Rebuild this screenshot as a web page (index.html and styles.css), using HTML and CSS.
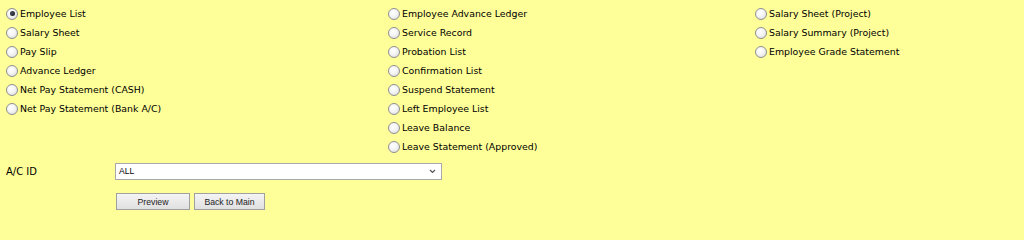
FILE: index.html
```html
<!DOCTYPE html>
<html>
<head>
<meta charset="utf-8">
<link rel="stylesheet" href="styles.css">
</head>
<body>
<div class="page">
  <div class="options">
    <div class="col col1">
      <label class="opt"><input type="radio" name="r" checked><span>Employee List</span></label>
      <label class="opt"><input type="radio" name="r"><span>Salary Sheet</span></label>
      <label class="opt"><input type="radio" name="r"><span>Pay Slip</span></label>
      <label class="opt"><input type="radio" name="r"><span>Advance Ledger</span></label>
      <label class="opt"><input type="radio" name="r"><span>Net Pay Statement (CASH)</span></label>
      <label class="opt"><input type="radio" name="r"><span>Net Pay Statement (Bank A/C)</span></label>
    </div>
    <div class="col col2">
      <label class="opt"><input type="radio" name="r"><span>Employee Advance Ledger</span></label>
      <label class="opt"><input type="radio" name="r"><span>Service Record</span></label>
      <label class="opt"><input type="radio" name="r"><span>Probation List</span></label>
      <label class="opt"><input type="radio" name="r"><span>Confirmation List</span></label>
      <label class="opt"><input type="radio" name="r"><span>Suspend Statement</span></label>
      <label class="opt"><input type="radio" name="r"><span>Left Employee List</span></label>
      <label class="opt"><input type="radio" name="r"><span>Leave Balance</span></label>
      <label class="opt"><input type="radio" name="r"><span>Leave Statement (Approved)</span></label>
    </div>
    <div class="col col3">
      <label class="opt"><input type="radio" name="r"><span>Salary Sheet (Project)</span></label>
      <label class="opt"><input type="radio" name="r"><span>Salary Summary (Project)</span></label>
      <label class="opt"><input type="radio" name="r"><span>Employee Grade Statement</span></label>
    </div>
  </div>
  <div class="field">
    <span class="field-label">A/C ID</span>
    <div class="select">
      <span class="select-value">ALL</span>
      <svg class="chev" width="7" height="5" viewBox="0 0 7 5"><path d="M1 1 L3.5 3.5 L6 1" fill="none" stroke="#555" stroke-width="1.2"/></svg>
    </div>
  </div>
  <div class="actions">
    <button class="btn btn-preview">Preview</button>
    <button class="btn btn-back">Back to Main</button>
  </div>
</div>
</body>
</html>
```
FILE: styles.css
```css
html, body {
  margin: 0;
  padding: 0;
  background: #ffff99;
}
body {
  font-family: "DejaVu Sans", Verdana, sans-serif;
  font-size: 9.4px;
  color: #000;
  width: 1024px;
  height: 224px;
  overflow: hidden;
}
.page {
  padding: 4px 0 0 6px;
}
.options {
  display: grid;
  grid-template-columns: 382px 367px auto;
  align-items: start;
}
.col {
  display: flex;
  flex-direction: column;
}
.opt {
  display: flex;
  align-items: center;
  height: 19px;
  white-space: nowrap;
}
.opt input {
  appearance: none;
  -webkit-appearance: none;
  margin: 0 2px 0 0;
  width: 12px;
  height: 12px;
  border-radius: 50%;
  border: 1px solid #8f8f8f;
  background: radial-gradient(circle at 40% 35%, #ffffff 0%, #f4f4f4 45%, #d6d6d6 100%);
  box-sizing: border-box;
  position: relative;
  flex: none;
}
.opt input:checked::after {
  content: "";
  position: absolute;
  left: 2.5px;
  top: 2.5px;
  width: 5px;
  height: 5px;
  border-radius: 50%;
  background: radial-gradient(circle at 40% 40%, #4a4a58 0%, #15151f 100%);
}
.field {
  display: flex;
  align-items: center;
  margin-top: 6px;
  height: 18px;
}
.field-label {
  width: 109px;
  font-size: 10px;
}
.select {
  width: 327px;
  height: 17px;
  box-sizing: border-box;
  border: 1px solid #a9a9a9;
  background: #fff;
  display: flex;
  align-items: center;
  justify-content: space-between;
  padding: 0 5px 0 3px;
  font-family: "Liberation Sans", Arial, sans-serif;
  font-size: 8.5px;
}
.chev {
  display: block;
}
.actions {
  display: flex;
  gap: 4px;
  margin: 13px 0 0 110px;
}
.btn {
  height: 17px;
  box-sizing: border-box;
  border: 1px solid #a0a0a0;
  background: linear-gradient(#f4f4f4, #e0e0e0);
  font-family: "Liberation Sans", Arial, sans-serif;
  font-size: 8.7px;
  color: #222;
  padding: 0;
}
.btn-preview {
  width: 74px;
}
.btn-back {
  width: 71px;
}
```
